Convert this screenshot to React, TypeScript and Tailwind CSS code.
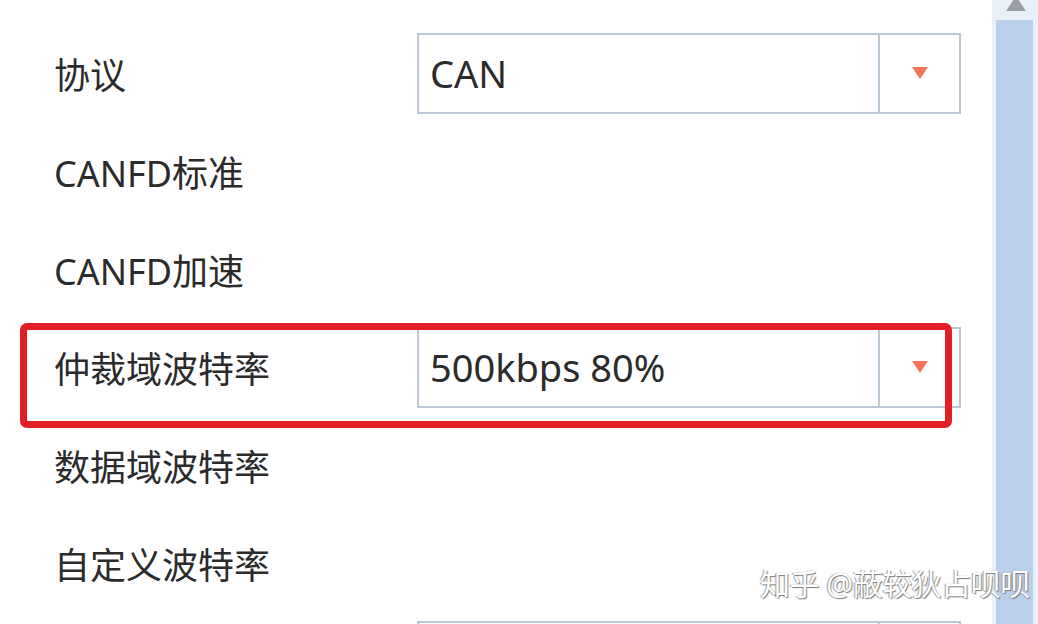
import type { ReactNode } from "react";

const FONT = "font-['Noto_Sans','Noto_Sans_CJK_SC',sans-serif]";

function Combo({ value }: { value?: string }) {
  return (
    <div className="flex h-[81px] w-[544px] shrink-0 border-2 border-[#bcc7d6] bg-white">
      <div className="flex flex-1 items-center pl-[11px] text-[38px] text-[#2b2b2b]">{value}</div>
      <div className="flex w-[81px] items-center justify-center border-l-2 border-[#bcc7d6]">
        <svg width="18" height="14" viewBox="0 0 18 14">
          <path d="M1 1 H17 L9 13 Z" fill="#f5735a" />
        </svg>
      </div>
    </div>
  );
}

function Row({ label, children, highlight }: { label: string; children?: ReactNode; highlight?: boolean }) {
  return (
    <div className="relative flex h-[98px] shrink-0 items-center">
      <div className="w-[417px] shrink-0 pl-[54px] pt-[5px] text-[36px] text-[#2b2b2b]">{label}</div>
      {children}
      {highlight ? (
        <div className="absolute left-[20px] top-[5px] h-[105px] w-[932px] rounded-[7px] border-[7px] border-[#e41e26]" />
      ) : null}
    </div>
  );
}

export default function App() {
  return (
    <div className={`relative flex h-[624px] w-[1038px] overflow-hidden bg-white ${FONT}`}>
      <div className="flex w-[992px] shrink-0 flex-col pt-[24px]">
        <Row label="协议">
          <Combo value="CAN" />
        </Row>
        <Row label="CANFD标准" />
        <Row label="CANFD加速" />
        <Row label="仲裁域波特率" highlight>
          <Combo value="500kbps 80%" />
        </Row>
        <Row label="数据域波特率" />
        <Row label="自定义波特率" />
        <Row label="">
          <Combo />
        </Row>
      </div>

      <div className="flex w-[46px] shrink-0 flex-col bg-[#eaf0f8]">
        <div className="flex h-[20px] items-start justify-center pl-[2px]">
          <svg width="22" height="12" viewBox="0 0 22 12">
            <path d="M11 -4 L21 11 H1 Z" fill="#9a9ea6" />
          </svg>
        </div>
        <div className="ml-[4px] mr-[5px] flex-1 bg-[#b9cfeb]" />
      </div>

      <div className="absolute left-[760px] top-[561px] whitespace-nowrap text-[30px] tracking-[-0.5px] text-white [text-shadow:1px_1px_1px_#7a7a7a,-1px_0_1px_#9a9a9a]">
        知乎 @蔽较狄占呗呗
      </div>
    </div>
  );
}
